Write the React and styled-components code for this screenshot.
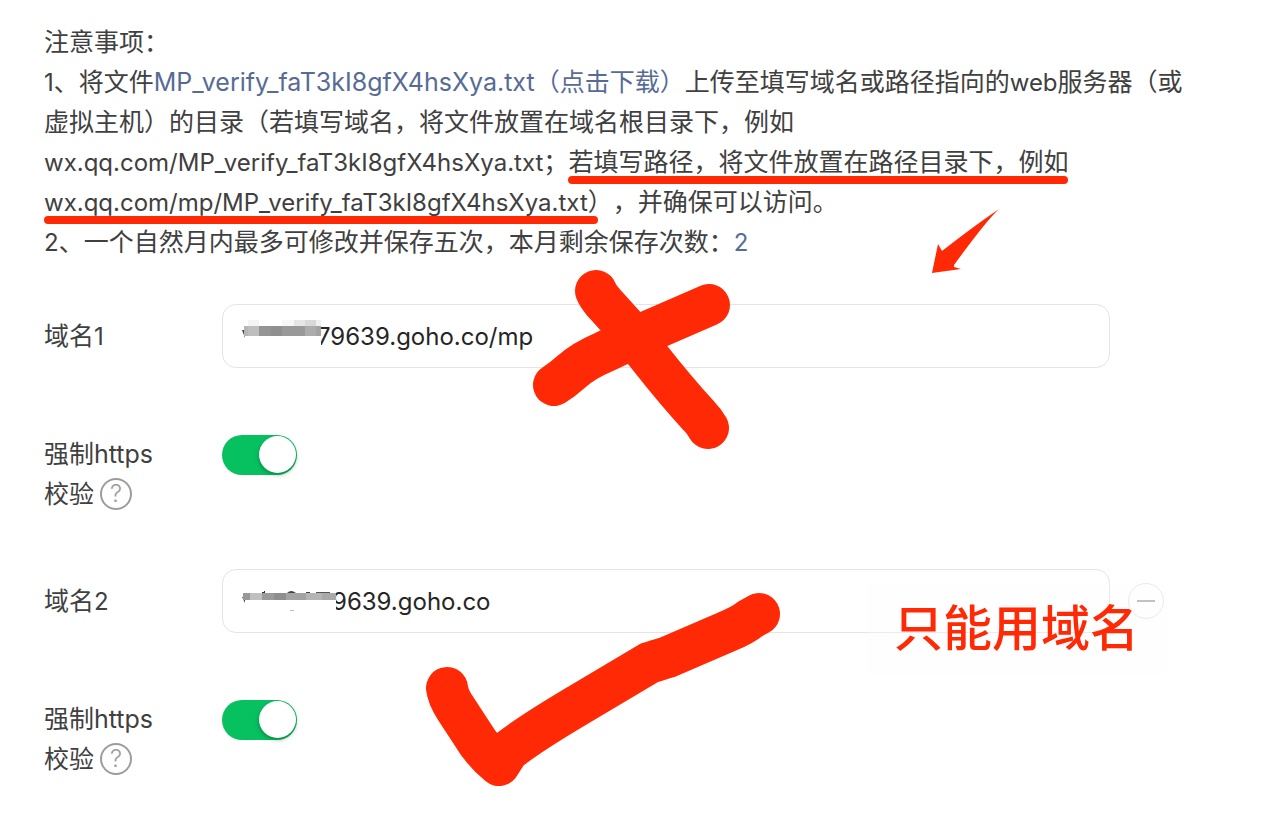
import React, { useState } from 'react';
import styled, { createGlobalStyle } from 'styled-components';

const GlobalStyle = createGlobalStyle`
    * {
        box-sizing: border-box;
    }

    body {
        margin: 0;
        background: #fff;
        color: #404040;
        font-family: Inter, "Noto Sans CJK SC", sans-serif;
        font-size: 25px;
        line-height: 40px;
        text-spacing-trim: space-all;
    }
`;

const Page = styled.main`
    padding: 22px 86px 32px 44px;
`;

const Notes = styled.section`
    position: relative;
    margin-bottom: 42px;

    p {
        margin: 0;
    }
`;

const Latin = styled.span`
    font-size: 24px;
    line-height: 1;
    white-space: nowrap;
`;

const DownloadLink = styled.a`
    color: #576b95;
    text-decoration: none;
`;

const Count = styled(Latin)`
    color: #576b95;
`;

const Underlined = styled.span`
    position: relative;
    white-space: nowrap;

    &::after {
        content: '';
        position: absolute;
        left: 0;
        right: ${({ $over }) => ($over ? -10 : 0)}px;
        bottom: -7px;
        height: 8px;
        border-radius: 4px;
        background: #ff2a05;
    }
`;

const Row = styled.div`
    position: relative;
    display: grid;
    grid-template-columns: 178px 1fr 86px;
    align-items: ${({ $top }) => ($top ? 'start' : 'center')};
    margin-bottom: ${({ $gap }) => $gap}px;
`;

const Label = styled.label`
    white-space: nowrap;
`;

const Field = styled.div`
    position: relative;
`;

const DomainInput = styled.input`
    display: block;
    width: 100%;
    height: 64px;
    padding: 0 20px 0 ${({ $start }) => $start}px;
    border: 1px solid #e4e4e4;
    border-radius: 14px;
    background: #fff;
    color: #262626;
    font-family: inherit;
    font-size: 24px;
    outline: none;
`;

const Mosaic = styled.svg`
    position: absolute;
    left: 18px;
    top: 14px;
    pointer-events: none;
`;

const Switch = styled.input`
    appearance: none;
    display: block;
    width: 75px;
    height: 40px;
    margin: 1px 0 0;
    padding: 1px;
    border-radius: 20px;
    background: ${({ checked }) => (checked ? '#07c160' : '#dfdfdf')};
    cursor: pointer;

    &::before {
        content: '';
        display: block;
        width: 37px;
        height: 37px;
        margin-left: ${({ checked }) => (checked ? 'auto' : '0')};
        border-radius: 50%;
        background: #fff;
        box-shadow: 0 2px 4px rgba(0, 0, 0, 0.3);
    }
`;

const HelpLine = styled.div`
    display: flex;
    align-items: center;
    gap: 6px;
`;

const HelpButton = styled.button`
    width: 32px;
    height: 32px;
    padding: 0;
    border: 2px solid #9c9c9c;
    border-radius: 50%;
    background: none;
    color: #9c9c9c;
    font-family: inherit;
    font-size: 24px;
    font-weight: 300;
    line-height: 28px;
`;

const RemoveButton = styled.button`
    display: flex;
    align-items: center;
    justify-content: center;
    width: 36px;
    height: 36px;
    margin-left: 18px;
    padding: 0;
    border: 1px solid #dfe2e6;
    border-radius: 50%;
    background: #fff;
`;

const Ink = styled.svg`
    position: absolute;
    left: ${({ $x }) => $x}px;
    top: ${({ $y }) => $y}px;
    pointer-events: none;
    fill: none;
    stroke: #ff2a05;
    stroke-width: 42;
    stroke-linecap: round;
    stroke-linejoin: round;
`;

const Remark = styled.strong`
    position: absolute;
    right: 29px;
    top: 14px;
    padding: 10px 28px;
    background: rgba(253, 253, 253, 0.3);
    color: #ff2a05;
    font-size: 49px;
    font-weight: 500;
    line-height: 72px;
    pointer-events: none;
`;

const HttpsRow = ({ id, gap }) => {
    const [on, setOn] = useState(true);

    return (
        <Row $top $gap={gap}>
            <div>
                <Label htmlFor={id}>强制https</Label>
                <HelpLine>
                    <Label htmlFor={id}>校验</Label>
                    <HelpButton type="button" aria-label="帮助">?</HelpButton>
                </HelpLine>
            </div>
            <Switch id={id} type="checkbox" checked={on} onChange={() => setOn(!on)} />
        </Row>
    );
};

const App = () => {
    const [first, setFirst] = useState('79639.goho.co/mp');
    const [second, setSecond] = useState('9639.goho.co');

    return (
        <>
            <GlobalStyle />
            <Page>
                <Notes>
                    <p>注意事项：</p>
                    <p>
                        <Latin>1</Latin>、将文件
                        <DownloadLink href="#download">MP_verify_faT3kI8gfX4hsXya.txt（点击下载）</DownloadLink>
                        上传至填写域名或路径指向的<Latin>web</Latin>服务器（或
                        <br />
                        虚拟主机）的目录（若填写域名，将文件放置在域名根目录下，例如
                        <br />
                        <Latin>wx.qq.com/MP_verify_faT3kI8gfX4hsXya.txt</Latin>；
                        <Underlined>若填写路径，将文件放置在路径目录下，例如</Underlined>
                        <br />
                        <Underlined $over>
                            <Latin>wx.qq.com/mp/MP_verify_faT3kI8gfX4hsXya.txt</Latin>
                        </Underlined>
                        ），并确保可以访问。
                    </p>
                    <p>
                        <Latin>2</Latin>、一个自然月内最多可修改并保存五次，本月剩余保存次数：<Count>2</Count>
                    </p>
                    {/* arrow pointing at the first field */}
                    <Ink $x={888} $y={187} width="68" height="65" viewBox="0 0 68 65">
                        <path
                            d="M67 0 Q54 12 22 56 L22 58 L29 60 L0 64 L6 35 L10 42 Q42 17 67 0Z"
                            fill="#ff2a05"
                            stroke="none"
                        />
                    </Ink>
                </Notes>

                <Row $gap={66}>
                    <Label htmlFor="domain1">域名<Latin>1</Latin></Label>
                    <Field>
                        <DomainInput
                            id="domain1"
                            $start={94}
                            value={first}
                            onChange={(e) => setFirst(e.target.value)}
                        />
                        <Mosaic width="82" height="36" viewBox="0 0 82 36" shapeRendering="crispEdges">
                            <path d="M0 0h81v36h-81z" fill="#fff" />
                            <path d="M2 12h3v8z" fill="#444" shapeRendering="auto" />
                            <path d="M8 2h11v6h-11z" fill="#f4f4f4" />
                            <path d="M42 2h12v6h-12z" fill="#f7f7f7" />
                            <path d="M54 2h11v6h-11z" fill="#e6e6e6" />
                            <path d="M65 2h11v6h-11z" fill="#d9d9d9" />
                            <path d="M76 2h5v6h-5z" fill="#f0f0f0" />
                            <path d="M4 8h4v10h-4z" fill="#b5b5b5" />
                            <path d="M8 8h11v10h-11z" fill="#bebebe" />
                            <path d="M19 8h12v10h-12z" fill="#959595" />
                            <path d="M31 8h11v10h-11z" fill="#8f8f8f" />
                            <path d="M42 8h23v10h-23z" fill="#999" />
                            <path d="M65 8h11v10h-11z" fill="#acacac" />
                            <path d="M76 8h5v10h-5z" fill="#a3a3a3" />
                        </Mosaic>
                    </Field>
                    <Ink $x={486} $y={-38} width="204" height="188" viewBox="530 266 204 188">
                        <path d="M596 291 Q598 296 604 303 L623 324 L650 358 Q676 391 699 416 Q704 421 708 428" />
                        <path d="M554 385 Q562 380 571 372 Q583 361 604 352 L640 335 L709 305" />
                    </Ink>
                </Row>

                <HttpsRow id="https1" gap={55} />

                <Row $gap={66}>
                    <Label htmlFor="domain2">域名<Latin>2</Latin></Label>
                    <Field>
                        <DomainInput
                            id="domain2"
                            $start={109}
                            value={second}
                            onChange={(e) => setSecond(e.target.value)}
                        />
                        <Mosaic width="98" height="36" viewBox="0 0 98 36" shapeRendering="crispEdges">
                            <path d="M0 0h96v36h-96z" fill="#fff" />
                            <path d="M2 14l3 6v-6z" fill="#444" shapeRendering="auto" />
                            <path d="M22 9l3 -1v2h-3z" fill="#333" />
                            <path d="M47 10q4 -4 9 0z" fill="#444" shapeRendering="auto" />
                            <path d="M65 10l2 -1h3v1z" fill="#444" />
                            <path d="M76 9h14v1h-14z" fill="#555" />
                            <path d="M50 27h4v1h-4z" fill="#bbb" />
                            <path d="M3 10h7v7h-7z" fill="#999" />
                            <path d="M10 10h12v7h-12z" fill="#c0c0c0" />
                            <path d="M22 10h12v7h-12z" fill="#9b9b9b" />
                            <path d="M34 10h12v7h-12z" fill="#8e8e8e" />
                            <path d="M46 10h20v7h-20z" fill="#a3a3a3" />
                            <path d="M66 10h16v7h-16z" fill="#b5b5b5" />
                            <path d="M82 10h14v7h-14z" fill="#a9a9a9" />
                        </Mosaic>
                    </Field>
                    <RemoveButton type="button" aria-label="删除域名2">
                        <svg width="18" height="2" viewBox="0 0 18 2">
                            <path d="M0 0h18v2h-18z" fill="#a8a8a8" />
                        </svg>
                    </RemoveButton>
                    <Ink $x={376} $y={19} width="366" height="204" viewBox="420 588 366 204">
                        <path d="M447 688 Q448 697 456 709 L473 735 Q483 752 499 765 L508 751 Q528 735 575 707 L649 663 Q655 661 668 657 L726 632 Q743 625 750 619 L759 614" />
                    </Ink>
                    <Remark>只能用域名</Remark>
                </Row>

                <HttpsRow id="https2" gap={0} />
            </Page>
        </>
    );
};

export default App;
